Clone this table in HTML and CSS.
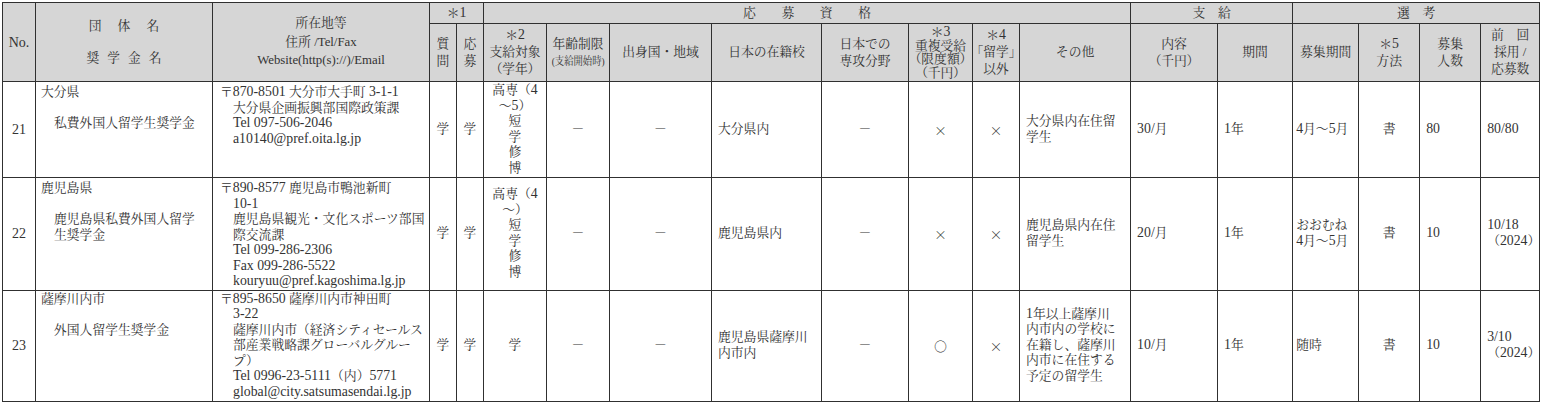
FILE: index.html
```html
<!DOCTYPE html>
<html lang="ja">
<head>
<meta charset="utf-8">
<title>奨学金一覧</title>
<link rel="stylesheet" href="styles.css">
</head>
<body>
<div class="wrap">
<table class="list">
<colgroup>
<col class="c-no"><col class="c-org"><col class="c-addr"><col class="c-q"><col class="c-a">
<col class="c-target"><col class="c-age"><col class="c-country"><col class="c-school"><col class="c-major">
<col class="c-dup"><col class="c-other4"><col class="c-etc"><col class="c-amount"><col class="c-period">
<col class="c-recruit"><col class="c-method"><col class="c-num"><col class="c-prev">
</colgroup>
<thead>
<tr class="hr1">
<th rowspan="2" class="no-h">No.</th>
<th rowspan="2"><div class="org-h1">団体名</div><div class="org-h2">奨学金名</div></th>
<th rowspan="2" class="addr-h">所在地等<br>住所 /Tel/Fax<br>Website(http(s)://)/Email</th>
<th colspan="2">＊<span class="l">1</span></th>
<th colspan="8">応　　募　　資　　格</th>
<th colspan="2">支　給</th>
<th colspan="4">選　考</th>
</tr>
<tr class="hr2">
<th>質<br>問</th>
<th>応<br>募</th>
<th>＊<span class="l">2</span><br>支給対象<br><span class="palt">（学年）</span></th>
<th>年齢制限<br><span class="cond">(支給開始時)</span></th>
<th>出身国・地域</th>
<th>日本の在籍校</th>
<th>日本での<br>専攻分野</th>
<th class="tight">＊<span class="l">3</span><br>重複受給<br><span class="palt">（限度額）</span><br><span class="palt">（千円）</span></th>
<th>＊<span class="l">4</span><br><span class="palt">「留学」</span><br>以外</th>
<th>その他</th>
<th>内容<br><span class="palt">（千円）</span></th>
<th>期間</th>
<th>募集期間</th>
<th>＊<span class="l">5</span><br>方法</th>
<th>募集<br>人数</th>
<th>前　回<br>採用 /<br>応募数</th>
</tr>
</thead>
<tbody>
<tr class="r21">
<td class="ctr num">21</td>
<td class="top org"><div>大分県</div><div class="sch">私費外国人留学生奨学金</div></td>
<td class="top addr"><div>〒<span class="l">870-8501</span> 大分市大手町 <span class="l">3-1-1</span></div><div class="ind">大分県企画振興部国際政策課<br><span class="l">Tel 097-506-2046</span><br><span class="l">a10140@pref.oita.lg.jp</span></div></td>
<td class="ctr">学</td>
<td class="ctr">学</td>
<td class="ctr">高専（<span class="l">4</span><br>～<span class="l">5</span>）<br>短<br>学<br>修<br>博</td>
<td class="ctr">－</td>
<td class="ctr">－</td>
<td class="lft">大分県内</td>
<td class="ctr">－</td>
<td class="ctr sym">×</td>
<td class="ctr sym">×</td>
<td class="lft">大分県内在住留<br>学生</td>
<td class="lft"><span class="l">30/</span>月</td>
<td class="lft"><span class="l">1</span>年</td>
<td class="lft sm"><span class="l">4</span>月～<span class="l">5</span>月</td>
<td class="ctr">書</td>
<td class="lft"><span class="l">80</span></td>
<td class="lft"><span class="l">80/80</span></td>
</tr>
<tr class="r22">
<td class="ctr num">22</td>
<td class="top org"><div>鹿児島県</div><div class="sch">鹿児島県私費外国人留学<br>生奨学金</div></td>
<td class="top addr"><div>〒<span class="l">890-8577</span> 鹿児島市鴨池新町</div><div class="ind"><span class="l">10-1</span><br>鹿児島県観光・文化スポーツ部国<br>際交流課<br><span class="l">Tel 099-286-2306</span><br><span class="l">Fax 099-286-5522</span><br><span class="l">kouryuu@pref.kagoshima.lg.jp</span></div></td>
<td class="ctr">学</td>
<td class="ctr">学</td>
<td class="ctr">高専（<span class="l">4</span><br>～）<br>短<br>学<br>修<br>博</td>
<td class="ctr">－</td>
<td class="ctr">－</td>
<td class="lft">鹿児島県内</td>
<td class="ctr">－</td>
<td class="ctr sym">×</td>
<td class="ctr sym">×</td>
<td class="lft">鹿児島県内在住<br>留学生</td>
<td class="lft"><span class="l">20/</span>月</td>
<td class="lft"><span class="l">1</span>年</td>
<td class="lft sm">おおむね<br><span class="l">4</span>月～<span class="l">5</span>月</td>
<td class="ctr">書</td>
<td class="lft"><span class="l">10</span></td>
<td class="lft"><span class="l">10/18</span><br>（<span class="l">2024</span>）</td>
</tr>
<tr class="r23">
<td class="ctr num">23</td>
<td class="top org t2"><div>薩摩川内市</div><div class="sch">外国人留学生奨学金</div></td>
<td class="top addr t2"><div>〒<span class="l">895-8650</span> 薩摩川内市神田町</div><div class="ind"><span class="l">3-22</span><br>薩摩川内市（経済シティセールス<br>部産業戦略課グローバルグルー<br>プ）<br><span class="l">Tel 0996-23-5111</span>（内）<span class="l">5771</span><br><span class="l">global@city.satsumasendai.lg.jp</span></div></td>
<td class="ctr">学</td>
<td class="ctr">学</td>
<td class="ctr">学</td>
<td class="ctr">－</td>
<td class="ctr">－</td>
<td class="lft">鹿児島県薩摩川<br>内市内</td>
<td class="ctr">－</td>
<td class="ctr sym">○</td>
<td class="ctr sym">×</td>
<td class="lft"><span class="l">1</span>年以上薩摩川<br>内市内の学校に<br>在籍し、薩摩川<br>内市に在住する<br>予定の留学生</td>
<td class="lft"><span class="l">10/</span>月</td>
<td class="lft"><span class="l">1</span>年</td>
<td class="lft sm">随時</td>
<td class="ctr">書</td>
<td class="lft"><span class="l">10</span></td>
<td class="lft"><span class="l">3/10</span><br>（<span class="l">2024</span>）</td>
</tr>
</tbody>
</table>
</div>
</body>
</html>
```
FILE: styles.css
```css
html, body {
  margin: 0;
  padding: 0;
  background: #ffffff;
}
body {
  font-family: "Liberation Serif", "Noto Serif CJK JP", "Noto Sans CJK JP", serif;
  color: #333333;
}
.wrap {
  padding: 2px 0 0 2px;
}
.list {
  border-collapse: collapse;
  table-layout: fixed;
  width: 1538px;
  font-size: 12.8px;
  line-height: 15.5px;
}
.list th,
.list td {
  border: 1px solid #303030;
  padding: 0;
  white-space: nowrap;
  overflow: hidden;
}
.list th {
  background: #d6d6d6;
  font-weight: normal;
  text-align: center;
  vertical-align: middle;
  line-height: 17px;
}
.list td {
  vertical-align: middle;
}

.c-no { width: 33px; }
.c-org { width: 177px; }
.c-addr { width: 217px; }
.c-q { width: 27px; }
.c-a { width: 27px; }
.c-target { width: 63px; }
.c-age { width: 63px; }
.c-country { width: 102px; }
.c-school { width: 110px; }
.c-major { width: 87px; }
.c-dup { width: 64px; }
.c-other4 { width: 47px; }
.c-etc { width: 111px; }
.c-amount { width: 87px; }
.c-period { width: 75px; }
.c-recruit { width: 66px; }
.c-method { width: 61px; }
.c-num { width: 61px; }
.c-prev { width: 59px; }

.hr1 { height: 21px; }
.hr2 { height: 58px; }
.r21 { height: 96px; }
.r22 { height: 112px; }
.r23 { height: 111px; }

.list .l {
  font-size: 13.8px;
  line-height: 1;
}
.list th.no-h {
  font-size: 14px;
}
.org-h1 {
  letter-spacing: 16px;
  margin-left: 16px;
  line-height: 17px;
}
.org-h2 {
  letter-spacing: 8px;
  margin-left: 8px;
  margin-top: 15px;
  line-height: 17px;
}
.list th.addr-h {
  line-height: 18.5px;
}
.list th.tight {
  line-height: 13.5px;
}
.palt {
  font-feature-settings: "palt" 1;
}
.cond {
  display: inline-block;
  font-size: 11px;
  line-height: 1;
  transform: scaleX(0.85);
  transform-origin: center;
  white-space: nowrap;
}

.list td.num {
  font-size: 14px;
}
.list td.sym {
  font-family: "Noto Serif CJK JP", "Noto Sans CJK JP", serif;
  font-size: 13px;
}
.ctr {
  text-align: center;
}
.list td.lft {
  text-align: left;
  padding-left: 6px;
}
.list td.lft.sm {
  padding-left: 3px;
}
.list td.top {
  vertical-align: top;
  padding-top: 3px;
}
.list td.top.t2 {
  padding-top: 1px;
}
.list td.org {
  padding-left: 5px;
}
.sch {
  margin-top: 15.5px;
  padding-left: 13px;
}
.list td.addr {
  padding-left: 7px;
}
.ind {
  padding-left: 13px;
}
```
